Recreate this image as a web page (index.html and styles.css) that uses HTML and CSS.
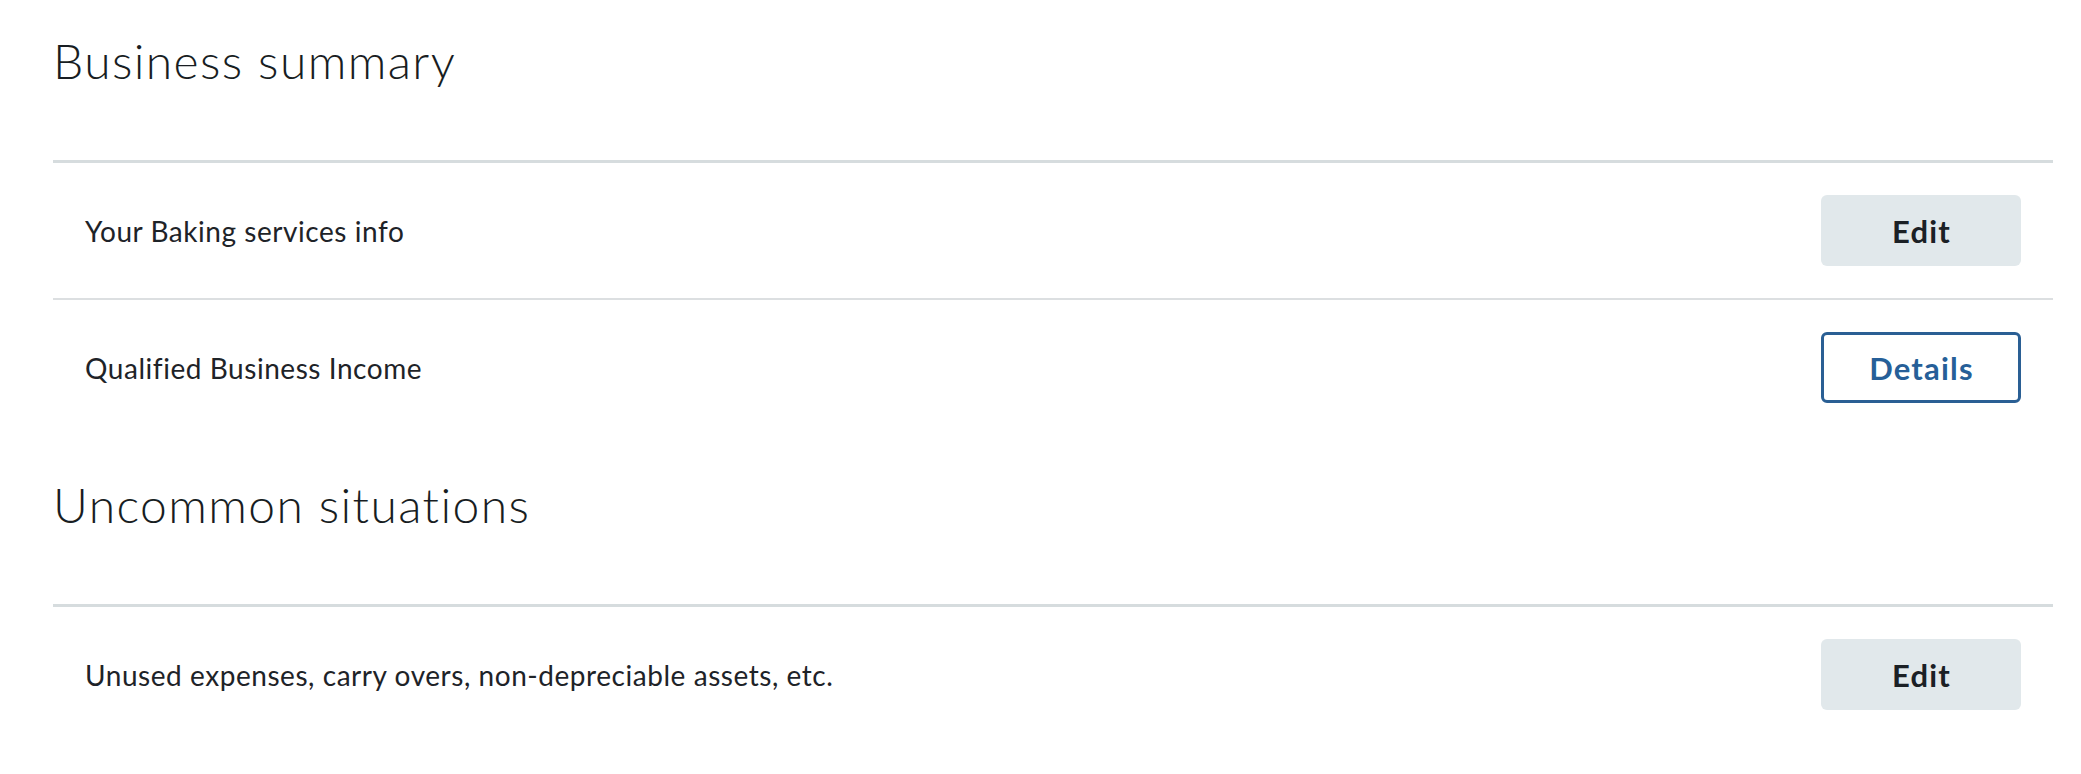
FILE: index.html
```html
<!DOCTYPE html>
<html lang="en">
<head>
<meta charset="utf-8">
<title>Business summary</title>
<link rel="stylesheet" href="styles.css">
</head>
<body>
<main class="page">
  <section class="section">
    <h2 class="section-title">Business summary</h2>
    <ul class="list">
      <li class="row">
        <span class="row-label">Your Baking services info</span>
        <button class="btn btn-secondary" type="button">Edit</button>
      </li>
      <li class="row">
        <span class="row-label">Qualified Business Income</span>
        <button class="btn btn-outline" type="button">Details</button>
      </li>
    </ul>
  </section>
  <section class="section">
    <h2 class="section-title">Uncommon situations</h2>
    <ul class="list">
      <li class="row">
        <span class="row-label">Unused expenses, carry overs, non-depreciable assets, etc.</span>
        <button class="btn btn-secondary" type="button">Edit</button>
      </li>
    </ul>
  </section>
</main>
</body>
</html>
```
FILE: styles.css
```css
html, body {
  margin: 0;
  padding: 0;
  background: #ffffff;
}

body {
  font-family: Lato, "Noto Sans", "Liberation Sans", sans-serif;
  color: #1e2328;
}

.page {
  padding: 0 28px 0 53px;
}

.section + .section {
  margin-top: 9px;
}

.section-title {
  margin: 0;
  padding: 37px 0 75px;
  font-size: 48px;
  line-height: 48px;
  font-weight: 300;
  letter-spacing: 1.4px;
  color: #181d22;
}

.list {
  list-style: none;
  margin: 0;
  padding: 0;
  border-top: 3px solid #d6dcde;
}

.row {
  display: flex;
  align-items: center;
  justify-content: space-between;
  padding: 32px 32px;
}

.row + .row {
  border-top: 2px solid #dcdfe1;
}

.row-label {
  font-size: 28px;
  line-height: 34px;
  letter-spacing: 0.55px;
}

.btn {
  box-sizing: border-box;
  width: 200px;
  height: 71px;
  border-radius: 6px;
  font-family: Lato, "Noto Sans", "Liberation Sans", sans-serif;
  font-size: 31px;
  font-weight: 700;
  letter-spacing: 1.2px;
  cursor: pointer;
  padding: 0 0 0 1px;
}

.btn-secondary {
  background: #e1e8eb;
  border: none;
  color: #1b2025;
}

.btn-outline {
  background: #ffffff;
  border: 3px solid #2a5f94;
  color: #265f98;
}
```
